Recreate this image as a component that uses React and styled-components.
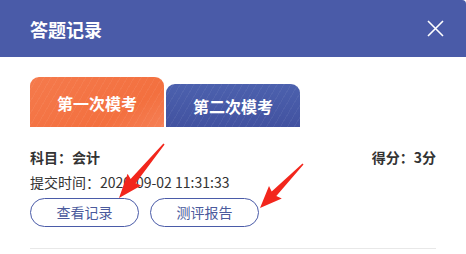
import React from 'react';
import styled, { createGlobalStyle } from 'styled-components';

const GlobalStyle = createGlobalStyle`
  html, body {
    margin: 0;
    padding: 0;
    background: #ffffff;
  }
  body {
    font-family: "Noto Sans CJK SC", "Noto Sans", sans-serif;
    color: #333333;
  }
`;

const tabs = [
  { id: 1, label: '第一次模考', active: true },
  { id: 2, label: '第二次模考', active: false },
];

const RecordDialog = () => (
  <StyledDialog>
    <Header>
      <Title>答题记录</Title>
      <CloseButton aria-label="close">
        <svg width="17" height="17" viewBox="0 0 17 17">
          <path d="M1 1 L16 16 M16 1 L1 16" stroke="#ffffff" strokeWidth="1.6" fill="none" />
        </svg>
      </CloseButton>
    </Header>
    <Body>
      <TabRow>
        {tabs.map((tab) => (
          <Tab key={tab.id} $active={tab.active}>
            {tab.label}
          </Tab>
        ))}
      </TabRow>
      <InfoRow>
        <Strong>科目：会计</Strong>
        <Strong>得分：3分</Strong>
      </InfoRow>
      <TimeRow>提交时间：2020-09-02 11:31:33</TimeRow>
      <ButtonRow>
        <OutlineButton>查看记录</OutlineButton>
        <OutlineButton>测评报告</OutlineButton>
      </ButtonRow>
      <Divider />
    </Body>
    <Arrows width="466" height="254" viewBox="0 0 466 254">
      <polygon
        points="164.6,144.5 135.6,183.2 141.2,185.4 119,198 127.6,173.8 130.6,179.0 163.4,143.5"
        fill="#f2261c"
      />
      <polygon
        points="303.5,164.5 276.3,196.0 281.8,198.5 260,208 269.0,186.0 271.7,191.4 302.5,163.5"
        fill="#f2261c"
      />
    </Arrows>
  </StyledDialog>
);

const StyledDialog = styled.div`
  position: relative;
  width: 466px;
  height: 254px;
  overflow: hidden;
  background: #ffffff;
`;

const Header = styled.div`
  height: 57px;
  padding: 0 22px 0 30px;
  display: flex;
  align-items: center;
  justify-content: space-between;
  background: #4a5ba8;
  border-top-right-radius: 4px;
`;

const Title = styled.h1`
  margin: 0;
  font-size: 18px;
  font-weight: 700;
  line-height: 20px;
  color: #ffffff;
`;

const CloseButton = styled.button`
  border: 0;
  padding: 0;
  background: transparent;
  display: flex;
  margin-top: -1px;
`;

const Body = styled.div`
  padding: 20px 30px 0;
`;

const TabRow = styled.div`
  display: flex;
  align-items: flex-end;
  gap: 2px;
`;

const Tab = styled.div`
  width: 134px;
  height: ${(p) => (p.$active ? '50px' : '43px')};
  display: flex;
  align-items: center;
  justify-content: center;
  border-radius: 9px 9px 0 0;
  font-size: 16px;
  font-weight: 700;
  color: #ffffff;
  box-sizing: border-box;
  padding-top: ${(p) => (p.$active ? '2px' : '0')};
  background:
    repeating-linear-gradient(
      120deg,
      rgba(255, 255, 255, 0.05) 0 1px,
      rgba(255, 255, 255, 0) 1px 6px
    ),
    ${(p) =>
      p.$active
        ? 'linear-gradient(150deg, #f57a4c 0%, #f3703f 70%, #f58057 100%)'
        : 'linear-gradient(180deg, #4c61ae 0%, #4252a0 100%)'};
`;

const InfoRow = styled.div`
  margin-top: 20px;
  display: flex;
  justify-content: space-between;
  line-height: 20px;
  font-size: 14px;
`;

const Strong = styled.span`
  font-weight: 700;
  color: #333333;
`;

const TimeRow = styled.div`
  margin-top: 5px;
  font-size: 14px;
  line-height: 20px;
  color: #333333;
`;

const ButtonRow = styled.div`
  margin-top: 6px;
  display: flex;
  gap: 11px;
`;

const OutlineButton = styled.button`
  width: 109px;
  height: 29px;
  padding: 0;
  border: 1px solid #4a5ba8;
  border-radius: 15px;
  background: #ffffff;
  font-family: "Noto Sans CJK SC", "Noto Sans", sans-serif;
  font-size: 14px;
  color: #4a5a9c;
  line-height: 27px;
`;

const Divider = styled.div`
  margin-top: 21px;
  height: 1px;
  background: #e8e8e8;
`;

const Arrows = styled.svg`
  position: absolute;
  left: 0;
  top: 0;
  pointer-events: none;
`;

const App = () => (
  <>
    <GlobalStyle />
    <RecordDialog />
  </>
);

export default App;
